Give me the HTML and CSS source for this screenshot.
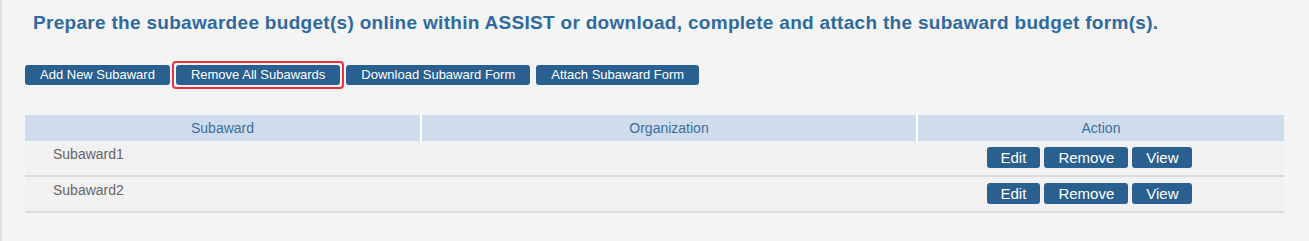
FILE: index.html
```html
<!DOCTYPE html>
<html>
<head>
<meta charset="utf-8">
<link rel="stylesheet" href="styles.css">
</head>
<body>
<div class="page">
  <h1 class="title">Prepare the subawardee budget(s) online within ASSIST or download, complete and attach the subaward budget form(s).</h1>
  <div class="toolbar">
    <button class="btn">Add New Subaward</button>
    <span class="highlight"><button class="btn">Remove All Subawards</button></span>
    <button class="btn">Download Subaward Form</button>
    <button class="btn">Attach Subaward Form</button>
  </div>
  <table class="grid">
    <colgroup>
      <col class="c1"><col class="c2"><col class="c3">
    </colgroup>
    <thead>
      <tr><th>Subaward</th><th>Organization</th><th>Action</th></tr>
    </thead>
    <tbody>
      <tr>
        <td><div class="name">Subaward1</div></td><td></td>
        <td><div class="actions"><button class="btn sm">Edit</button><button class="btn sm">Remove</button><button class="btn sm">View</button></div></td>
      </tr>
      <tr>
        <td><div class="name">Subaward2</div></td><td></td>
        <td><div class="actions"><button class="btn sm">Edit</button><button class="btn sm">Remove</button><button class="btn sm">View</button></div></td>
      </tr>
    </tbody>
  </table>
</div>
</body>
</html>
```
FILE: styles.css
```css
html, body { margin: 0; padding: 0; background: #f4f4f4; }
body { font-family: "Liberation Sans", Arial, sans-serif; }
.page {
  height: 241px;
  box-sizing: border-box;
  border-left: 2px solid #e2e2e2;
  padding: 10px 0 0 23px;
}
.title {
  margin: 0 0 0 8px;
  font-size: 19px;
  font-weight: bold;
  color: #2e6a9e;
  line-height: 26px;
  letter-spacing: 0.3px;
}
.toolbar {
  display: flex;
  align-items: center;
  margin-top: 29px;
  height: 20px;
}
.btn {
  background: #2a6090;
  color: #fff;
  border: none;
  border-radius: 3px;
  font-family: "Liberation Sans", Arial, sans-serif;
  font-size: 13px;
  height: 20px;
  padding: 0 15px;
  line-height: 20px;
  cursor: pointer;
}
.toolbar .btn { margin-right: 6px; }
.highlight {
  display: inline-flex;
  border: 2px solid #e8333a;
  border-radius: 4px;
  padding: 2px;
  margin: 0 2px 0 -4px;
}
.highlight .btn { margin-right: 0; }
.grid {
  margin-top: 30px;
  width: 1259px;
  border-collapse: collapse;
  font-size: 14px;
}
.c1 { width: 396px; }
.c2 { width: 496px; }
.grid th {
  background: #cfdcec;
  color: #3b6ea0;
  font-weight: normal;
  height: 26px;
  padding: 0;
  border-left: 2px solid #fff;
}
.grid th:first-child { border-left: none; }
.grid td {
  height: 34px;
  padding: 0;
  background: #f1f1f1;
  border-bottom: 2px solid #dcdcdc;
  vertical-align: top;
}
.name {
  color: #666;
  padding: 5px 0 0 28px;
}
.actions {
  display: flex;
  justify-content: center;
  gap: 4px;
  padding: 6px 22px 0 0;
}
.btn.sm {
  font-size: 15px;
  height: 21px;
  line-height: 21px;
  padding: 0 14px;
}
```
